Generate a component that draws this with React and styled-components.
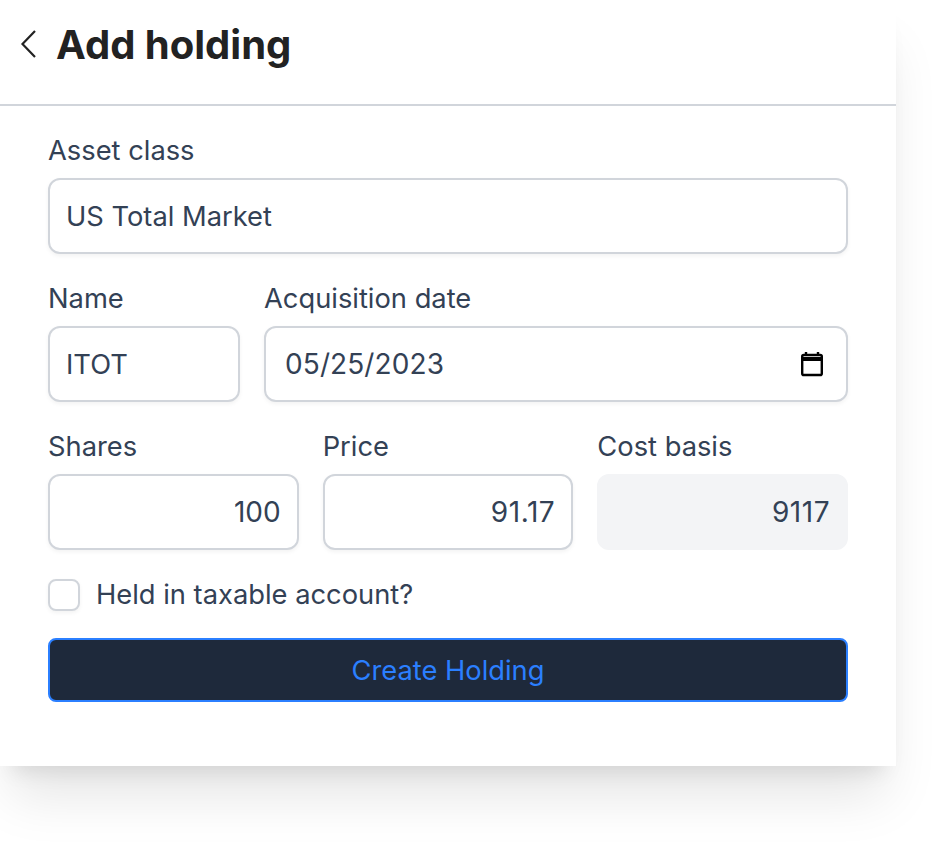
import React from "react";
import styled, { createGlobalStyle } from "styled-components";

const GlobalStyle = createGlobalStyle`
  html, body, #root {
    margin: 0;
    min-height: 100vh;
    background: #fff;
    font-family: Inter, "Liberation Sans", sans-serif;
  }
`;

const Panel = styled.div`
  width: 896px;
  height: 766px;
  background: #fff;
  box-shadow: 0 40px 50px -10px rgba(0, 0, 0, .1), 0 16px 20px -12px rgba(0, 0, 0, .1);
`;

const Header = styled.header`
  display: flex;
  align-items: center;
  height: 104px;
  padding-left: 16px;
  gap: 16px;
  border-bottom: 2px solid #d1d5db;
`;

const Title = styled.h1`
  margin: 0 0 15px;
  font-size: 40px;
  line-height: 56px;
  font-weight: 700;
  color: #222;
`;

const BackIcon = styled.svg`
  width: 24px;
  height: 32px;
  margin-bottom: 16px;
  flex: none;
`;

const Form = styled.form`
  display: flex;
  flex-direction: column;
  gap: 24px;
  padding: 24px 48px 0;
`;

const Row = styled.div`
  display: grid;
  grid-template-columns: ${props => props.$columns || "1fr"};
  gap: 24px;
`;

const Field = styled.label`
  display: flex;
  flex-direction: column;
  min-width: 0;
`;

const LabelText = styled.span`
  padding-top: 1px;
  font-size: 27.3px;
  line-height: 40px;
  margin-bottom: 7px;
  color: #334155;
`;

const InputWrap = styled.div`
  position: relative;
`;

const Input = styled.input`
  display: block;
  width: 100%;
  height: 76px;
  box-sizing: border-box;
  padding: 0 ${props => props.$date ? "19px" : "16px"};
  font: inherit;
  font-size: ${props => props.$numeric ? "28px" : "27.3px"};
  letter-spacing: ${props => props.$spacing || "normal"};
  color: #334155;
  text-align: ${props => props.$numeric && !props.$date ? "right" : "left"};
  background: ${props => props.disabled ? "#f3f4f6" : "#fff"};
  border: 2px solid ${props => props.disabled ? "#f3f4f6" : "#d1d5db"};
  border-radius: 12px;
  box-shadow: ${props => props.disabled ? "none" : "0 2px 4px rgba(0, 0, 0, .05)"};
  outline: none;
  opacity: 1;
  -webkit-text-fill-color: #334155;
`;

const CalendarIcon = styled.svg`
  position: absolute;
  top: 25px;
  right: 24px;
  width: 24px;
  height: 26px;
  pointer-events: none;
`;

const CheckRow = styled.label`
  display: flex;
  align-items: center;
  gap: 16px;
  margin-top: 1px;
  margin-bottom: -1px;
  font-size: 27.3px;
  line-height: 40px;
  color: #334155;
`;

const Checkbox = styled.span`
  width: 32px;
  height: 32px;
  box-sizing: border-box;
  background: #fff;
  border: 2px solid #d1d5db;
  border-radius: 8px;
  box-shadow: 0 2px 4px rgba(0, 0, 0, .05);
`;

const SubmitButton = styled.button`
  height: 64px;
  font: inherit;
  font-size: 27.3px;
  color: #2b7fff;
  background: #1e293b;
  border: 2px solid #2b7fff;
  border-radius: 8px;
`;

const App = () => (
  <>
    <GlobalStyle />
    <Panel>
      <Header>
        <BackIcon viewBox="0 0 24 32" fill="none" stroke="#222" strokeWidth="2.2">
          <path d="M19 3 L6.5 16 L19 29" />
        </BackIcon>
        <Title>Add holding</Title>
      </Header>
      <Form onSubmit={e => e.preventDefault()}>
        <Row>
          <Field>
            <LabelText>Asset class</LabelText>
            <Input defaultValue="US Total Market" />
          </Field>
        </Row>
        <Row $columns="192px 1fr">
          <Field>
            <LabelText>Name</LabelText>
            <Input defaultValue="ITOT" />
          </Field>
          <Field>
            <LabelText>Acquisition date</LabelText>
            <InputWrap>
              <Input $date $numeric $spacing=".1px" defaultValue="05/25/2023" />
              <CalendarIcon viewBox="0 0 24 26" fill="none">
                <path d="M6 1v4M18 1v4" stroke="#000" strokeWidth="2.4" />
                <rect x="2.2" y="4" width="19.6" height="20" rx="1.6" stroke="#000" strokeWidth="2.4" />
                <path d="M2 8h20" stroke="#000" strokeWidth="4" />
              </CalendarIcon>
            </InputWrap>
          </Field>
        </Row>
        <Row $columns="repeat(3, 1fr)">
          <Field>
            <LabelText>Shares</LabelText>
            <Input $numeric defaultValue="100" />
          </Field>
          <Field>
            <LabelText>Price</LabelText>
            <Input $numeric $spacing=".6px" defaultValue="91.17" />
          </Field>
          <Field>
            <LabelText>Cost basis</LabelText>
            <Input $numeric $spacing=".5px" disabled defaultValue="9117" />
          </Field>
        </Row>
        <CheckRow>
          <Checkbox />
          Held in taxable account?
        </CheckRow>
        <SubmitButton type="submit">Create Holding</SubmitButton>
      </Form>
    </Panel>
  </>
);

export default App;
